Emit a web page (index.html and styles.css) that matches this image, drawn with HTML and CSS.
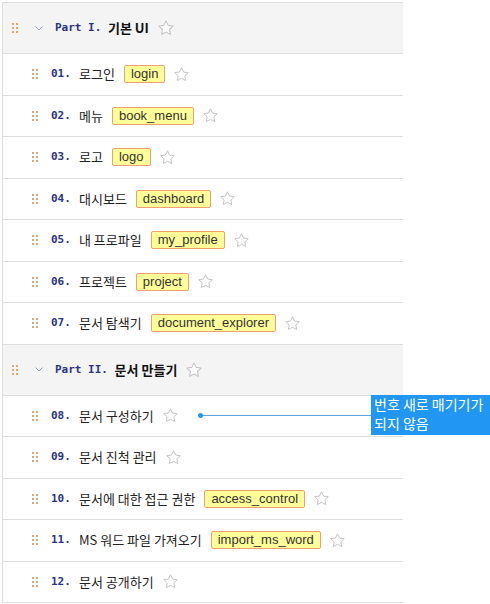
FILE: index.html
```html
<!DOCTYPE html>
<html>
<head>
	<meta charset="utf-8">
	<title>문서 목차</title>
	<link rel="stylesheet" href="styles.css">
</head>
<body>
<div class="toc">
	<div class="part">
		<svg class="grip" width="6" height="10"><rect x="0" y="0" width="2" height="2"/><rect x="4" y="0" width="2" height="2"/><rect x="0" y="4" width="2" height="2"/><rect x="4" y="4" width="2" height="2"/><rect x="0" y="8" width="2" height="2"/><rect x="4" y="8" width="2" height="2"/></svg>
		<svg class="chev" width="8" height="5"><polyline points="0.5,0.5 4,4 7.5,0.5"/></svg>
		<span class="pnum">Part I. </span><span class="ptitle">기본 UI</span>
		<svg class="star big" viewBox="0 0 24 24"><path d="M12 2.5l2.9 6 6.6.9-4.8 4.6 1.2 6.5L12 17.4l-5.9 3.1 1.2-6.5-4.8-4.6 6.6-.9z"/></svg>
	</div>
	<div class="item">
		<svg class="grip" width="6" height="10"><rect x="0" y="0" width="2" height="2"/><rect x="4" y="0" width="2" height="2"/><rect x="0" y="4" width="2" height="2"/><rect x="4" y="4" width="2" height="2"/><rect x="0" y="8" width="2" height="2"/><rect x="4" y="8" width="2" height="2"/></svg>
		<span class="num">01.</span><span class="title">로그인</span><span class="tag">login</span>
		<svg class="star" viewBox="0 0 24 24"><path d="M12 2.5l2.9 6 6.6.9-4.8 4.6 1.2 6.5L12 17.4l-5.9 3.1 1.2-6.5-4.8-4.6 6.6-.9z"/></svg>
	</div>
	<div class="item">
		<svg class="grip" width="6" height="10"><rect x="0" y="0" width="2" height="2"/><rect x="4" y="0" width="2" height="2"/><rect x="0" y="4" width="2" height="2"/><rect x="4" y="4" width="2" height="2"/><rect x="0" y="8" width="2" height="2"/><rect x="4" y="8" width="2" height="2"/></svg>
		<span class="num">02.</span><span class="title">메뉴</span><span class="tag">book_menu</span>
		<svg class="star" viewBox="0 0 24 24"><path d="M12 2.5l2.9 6 6.6.9-4.8 4.6 1.2 6.5L12 17.4l-5.9 3.1 1.2-6.5-4.8-4.6 6.6-.9z"/></svg>
	</div>
	<div class="item">
		<svg class="grip" width="6" height="10"><rect x="0" y="0" width="2" height="2"/><rect x="4" y="0" width="2" height="2"/><rect x="0" y="4" width="2" height="2"/><rect x="4" y="4" width="2" height="2"/><rect x="0" y="8" width="2" height="2"/><rect x="4" y="8" width="2" height="2"/></svg>
		<span class="num">03.</span><span class="title">로고</span><span class="tag">logo</span>
		<svg class="star" viewBox="0 0 24 24"><path d="M12 2.5l2.9 6 6.6.9-4.8 4.6 1.2 6.5L12 17.4l-5.9 3.1 1.2-6.5-4.8-4.6 6.6-.9z"/></svg>
	</div>
	<div class="item">
		<svg class="grip" width="6" height="10"><rect x="0" y="0" width="2" height="2"/><rect x="4" y="0" width="2" height="2"/><rect x="0" y="4" width="2" height="2"/><rect x="4" y="4" width="2" height="2"/><rect x="0" y="8" width="2" height="2"/><rect x="4" y="8" width="2" height="2"/></svg>
		<span class="num">04.</span><span class="title">대시보드</span><span class="tag">dashboard</span>
		<svg class="star" viewBox="0 0 24 24"><path d="M12 2.5l2.9 6 6.6.9-4.8 4.6 1.2 6.5L12 17.4l-5.9 3.1 1.2-6.5-4.8-4.6 6.6-.9z"/></svg>
	</div>
	<div class="item">
		<svg class="grip" width="6" height="10"><rect x="0" y="0" width="2" height="2"/><rect x="4" y="0" width="2" height="2"/><rect x="0" y="4" width="2" height="2"/><rect x="4" y="4" width="2" height="2"/><rect x="0" y="8" width="2" height="2"/><rect x="4" y="8" width="2" height="2"/></svg>
		<span class="num">05.</span><span class="title">내 프로파일</span><span class="tag">my_profile</span>
		<svg class="star" viewBox="0 0 24 24"><path d="M12 2.5l2.9 6 6.6.9-4.8 4.6 1.2 6.5L12 17.4l-5.9 3.1 1.2-6.5-4.8-4.6 6.6-.9z"/></svg>
	</div>
	<div class="item">
		<svg class="grip" width="6" height="10"><rect x="0" y="0" width="2" height="2"/><rect x="4" y="0" width="2" height="2"/><rect x="0" y="4" width="2" height="2"/><rect x="4" y="4" width="2" height="2"/><rect x="0" y="8" width="2" height="2"/><rect x="4" y="8" width="2" height="2"/></svg>
		<span class="num">06.</span><span class="title">프로젝트</span><span class="tag">project</span>
		<svg class="star" viewBox="0 0 24 24"><path d="M12 2.5l2.9 6 6.6.9-4.8 4.6 1.2 6.5L12 17.4l-5.9 3.1 1.2-6.5-4.8-4.6 6.6-.9z"/></svg>
	</div>
	<div class="item">
		<svg class="grip" width="6" height="10"><rect x="0" y="0" width="2" height="2"/><rect x="4" y="0" width="2" height="2"/><rect x="0" y="4" width="2" height="2"/><rect x="4" y="4" width="2" height="2"/><rect x="0" y="8" width="2" height="2"/><rect x="4" y="8" width="2" height="2"/></svg>
		<span class="num">07.</span><span class="title">문서 탐색기</span><span class="tag">document_explorer</span>
		<svg class="star" viewBox="0 0 24 24"><path d="M12 2.5l2.9 6 6.6.9-4.8 4.6 1.2 6.5L12 17.4l-5.9 3.1 1.2-6.5-4.8-4.6 6.6-.9z"/></svg>
	</div>
	<div class="part">
		<svg class="grip" width="6" height="10"><rect x="0" y="0" width="2" height="2"/><rect x="4" y="0" width="2" height="2"/><rect x="0" y="4" width="2" height="2"/><rect x="4" y="4" width="2" height="2"/><rect x="0" y="8" width="2" height="2"/><rect x="4" y="8" width="2" height="2"/></svg>
		<svg class="chev" width="8" height="5"><polyline points="0.5,0.5 4,4 7.5,0.5"/></svg>
		<span class="pnum">Part II. </span><span class="ptitle">문서 만들기</span>
		<svg class="star big" viewBox="0 0 24 24"><path d="M12 2.5l2.9 6 6.6.9-4.8 4.6 1.2 6.5L12 17.4l-5.9 3.1 1.2-6.5-4.8-4.6 6.6-.9z"/></svg>
	</div>
	<div class="item note-row">
		<svg class="grip" width="6" height="10"><rect x="0" y="0" width="2" height="2"/><rect x="4" y="0" width="2" height="2"/><rect x="0" y="4" width="2" height="2"/><rect x="4" y="4" width="2" height="2"/><rect x="0" y="8" width="2" height="2"/><rect x="4" y="8" width="2" height="2"/></svg>
		<span class="num">08.</span><span class="title">문서 구성하기</span>
		<svg class="star" viewBox="0 0 24 24"><path d="M12 2.5l2.9 6 6.6.9-4.8 4.6 1.2 6.5L12 17.4l-5.9 3.1 1.2-6.5-4.8-4.6 6.6-.9z"/></svg>
		<div class="leader"></div>
		<div class="note">번호 새로 매기기가<br>되지 않음</div>
	</div>
	<div class="item">
		<svg class="grip" width="6" height="10"><rect x="0" y="0" width="2" height="2"/><rect x="4" y="0" width="2" height="2"/><rect x="0" y="4" width="2" height="2"/><rect x="4" y="4" width="2" height="2"/><rect x="0" y="8" width="2" height="2"/><rect x="4" y="8" width="2" height="2"/></svg>
		<span class="num">09.</span><span class="title">문서 진척 관리</span>
		<svg class="star" viewBox="0 0 24 24"><path d="M12 2.5l2.9 6 6.6.9-4.8 4.6 1.2 6.5L12 17.4l-5.9 3.1 1.2-6.5-4.8-4.6 6.6-.9z"/></svg>
	</div>
	<div class="item">
		<svg class="grip" width="6" height="10"><rect x="0" y="0" width="2" height="2"/><rect x="4" y="0" width="2" height="2"/><rect x="0" y="4" width="2" height="2"/><rect x="4" y="4" width="2" height="2"/><rect x="0" y="8" width="2" height="2"/><rect x="4" y="8" width="2" height="2"/></svg>
		<span class="num">10.</span><span class="title">문서에 대한 접근 권한</span><span class="tag">access_control</span>
		<svg class="star" viewBox="0 0 24 24"><path d="M12 2.5l2.9 6 6.6.9-4.8 4.6 1.2 6.5L12 17.4l-5.9 3.1 1.2-6.5-4.8-4.6 6.6-.9z"/></svg>
	</div>
	<div class="item">
		<svg class="grip" width="6" height="10"><rect x="0" y="0" width="2" height="2"/><rect x="4" y="0" width="2" height="2"/><rect x="0" y="4" width="2" height="2"/><rect x="4" y="4" width="2" height="2"/><rect x="0" y="8" width="2" height="2"/><rect x="4" y="8" width="2" height="2"/></svg>
		<span class="num">11.</span><span class="title">MS 워드 파일 가져오기</span><span class="tag">import_ms_word</span>
		<svg class="star" viewBox="0 0 24 24"><path d="M12 2.5l2.9 6 6.6.9-4.8 4.6 1.2 6.5L12 17.4l-5.9 3.1 1.2-6.5-4.8-4.6 6.6-.9z"/></svg>
	</div>
	<div class="item">
		<svg class="grip" width="6" height="10"><rect x="0" y="0" width="2" height="2"/><rect x="4" y="0" width="2" height="2"/><rect x="0" y="4" width="2" height="2"/><rect x="4" y="4" width="2" height="2"/><rect x="0" y="8" width="2" height="2"/><rect x="4" y="8" width="2" height="2"/></svg>
		<span class="num">12.</span><span class="title">문서 공개하기</span>
		<svg class="star" viewBox="0 0 24 24"><path d="M12 2.5l2.9 6 6.6.9-4.8 4.6 1.2 6.5L12 17.4l-5.9 3.1 1.2-6.5-4.8-4.6 6.6-.9z"/></svg>
	</div>
</div>
</body>
</html>
```

FILE: styles.css
```css
html,body{overflow:hidden;}
body{margin:0;background:#fff;color:#222;font:13px/18px "Noto Sans CJK KR","Liberation Sans",sans-serif;}
.toc{margin:2px 0 0 2px;width:400px;border-left:1px solid #ddd;border-top:1px solid #ddd;}
.part,.item{display:flex;align-items:center;border-bottom:1px solid #ddd;white-space:nowrap;}
.part{height:50px;padding-left:9px;background:#f4f4f4;}
.item{height:40.5px;padding-left:29px;position:relative;}
.grip{flex:none;fill:#d8a878;}
.chev{flex:none;margin:0 12px 0 17px;fill:none;stroke:#9ba6c4;stroke-width:1;}
.item .grip{margin-right:13px;}
.pnum,.num{font:bold 11px/18px "DejaVu Sans Mono","Liberation Mono",monospace;color:#2a3382;white-space:pre;}
.num{width:28px;flex:none;}
.ptitle{font-weight:bold;color:#111;}
.title{color:#222;}
.tag{margin-left:9px;padding:0 6px;border:1px solid #f0a070;border-radius:2px;background:#ffff99;color:#333;font:13px/16px "Liberation Sans",Arial,sans-serif;}
.star{flex:none;width:17px;height:17px;margin-left:8px;fill:#fff;stroke:#c4c4c4;stroke-width:1.4;stroke-linejoin:round;}
.star.big{width:18px;height:18px;}
.leader{position:absolute;left:195px;top:19px;width:174px;height:1px;background:#5ba3e6;}
.leader:before{content:"";position:absolute;left:0;top:-2px;width:5px;height:5px;border-radius:50%;background:#2196f3;}
.note{position:absolute;left:368px;top:-1px;width:130px;height:40px;padding-left:3px;background:#2196f3;color:#fff;font-size:14px;line-height:19px;}
```
